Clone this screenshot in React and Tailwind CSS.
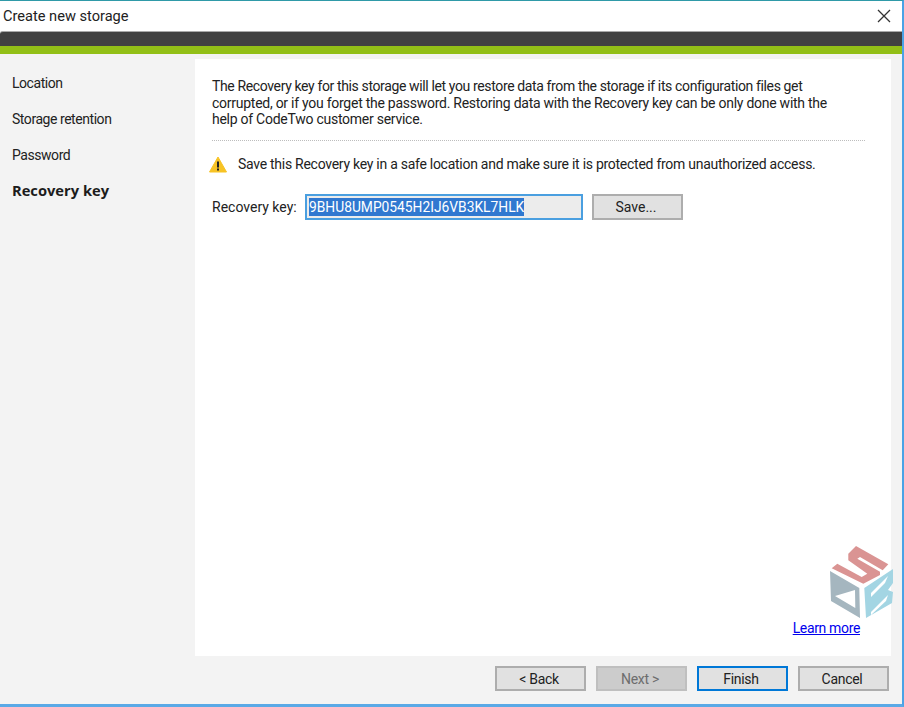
const navItems = ["Location", "Storage retention", "Password", "Recovery key"];

const CubeLogo = () => (
  <svg width="66" height="76" viewBox="0 0 66 76" className="block">
    {/* S, lid of the cube */}
    <path
      d="M26 1 L58.3 19.3 L52.7 25.3 L30 12 L27.3 13.7 L50 26.7 L50 30 L33.3 38.7 L1.7 23.3 L7.3 18.7 L31.7 32 L37.3 28.7 L18.3 15.3 L18.3 8.7 Z"
      fill="#da9493"
    />
    {/* left face */}
    <path fillRule="evenodd" d="M0 26 L29.3 43 L30 73 L1 56 Z M5 51 L25 45 L25.3 63 Z" fill="#a5b6bf" />
    {/* B, right face */}
    <path
      fillRule="evenodd"
      d="M63 24 L63 38 L58 45 L63 47 L62 58 L36 73 L34.3 43 Z M41 48 L58 31 L55 38 L41 52 Z M41 67 L58 50 L56 56 L41 70 Z"
      fill="#a3d5e3"
    />
  </svg>
);

const WarningIcon = () => (
  <svg width="18" height="17" viewBox="0 0 18 17" className="block shrink-0">
    <path d="M9 1 L17.5 16 L0.5 16 Z" fill="#f7c325" stroke="#f7c325" strokeLinejoin="round" />
    <rect x="8" y="5.5" width="2" height="6" fill="#222" />
    <rect x="8" y="12.5" width="2" height="2" fill="#222" />
  </svg>
);

const FooterButton = ({ label, disabled, focused }) => (
  <button
    className={`w-[91px] h-[25px] flex items-center justify-center pr-[3px] text-[14px] tracking-[-0.3px] leading-none ${
      disabled
        ? "bg-[#cccccc] border-2 border-[#bfbfbf] text-[#6d6d6d]"
        : focused
        ? "bg-[#e1e1e1] border-2 border-[#0078d7] text-[#222]"
        : "bg-[#e1e1e1] border-2 border-[#adadad] text-[#222]"
    }`}
  >
    {label}
  </button>
);

export default function App() {
  return (
    <div
      className="relative w-[904px] h-[707px] overflow-hidden flex flex-col bg-[#f3f3f3] border-t border-t-[#2f9aa8] border-r-2 border-r-[#4aa3e6] border-b-[3px] border-b-[#5aa9e6] text-[#222]"
      style={{ fontFamily: 'Roboto, "Noto Sans", sans-serif' }}
    >
      {/* Title bar */}
      <div className="h-[30px] shrink-0 bg-white flex items-center justify-between pl-[3px] pr-[11px]">
        <span className="text-[14.6px] leading-none">Create new storage</span>
        <svg width="14" height="14" viewBox="0 0 14 14" className="block">
          <path d="M1 1 L13 13 M13 1 L1 13" stroke="#333" strokeWidth="1.3" fill="none" />
        </svg>
      </div>
      <div className="h-[15px] shrink-0 bg-[#414141] border-t border-t-[#a9a9a9] rounded-tl-[3px]" />
      <div className="h-[8px] shrink-0 bg-[#92bf17]" />

      <div className="flex-1 flex flex-col min-h-0">
        <div className="flex-1 flex min-h-0 pt-[5px] pr-[11px]">
          {/* Steps */}
          <nav className="w-[195px] shrink-0 flex flex-col pt-[6px]">
            {navItems.map((item, i) => (
              <div
                key={item}
                className={`h-[36px] flex items-center pl-[12px] leading-none ${
                  i === 3 ? "font-['Open_Sans'] text-[14.7px] font-bold text-[#1c1c1c] -translate-y-px" : "text-[14px] tracking-[-0.45px]"
                }`}
              >
                {item}
              </div>
            ))}
          </nav>

          {/* Main panel */}
          <main className="flex-1 bg-white flex flex-col pt-[19px] pl-[17px] pr-[26px] pb-[21px]">
            <p className="text-[14px] tracking-[-0.26px] leading-[16.5px] whitespace-nowrap">
              <span className="tracking-[-0.37px]">
                The Recovery key for this storage will let you restore data from the storage if its configuration files get
              </span>
              <br />
              corrupted, or if you forget the password. Restoring data with the Recovery key can be only done with the
              <br />
              help of CodeTwo customer service.
            </p>
            <div className="mt-[12px] border-t border-dotted border-t-[#bdbdbd]" />
            <div className="mt-[15px] flex items-center gap-[11px] -ml-[3px]">
              <WarningIcon />
              <span className="text-[14px] tracking-[-0.27px] leading-none whitespace-nowrap">
                Save this Recovery key in a safe location and make sure it is protected from unauthorized access.
              </span>
            </div>
            <div className="mt-[21px] flex items-center">
              <span className="text-[14px] leading-none whitespace-nowrap w-[93px]">Recovery key:</span>
              <div className="w-[278px] h-[26px] flex items-center border-2 border-[#4a9fe0] bg-[#ececec] pl-[2px]">
                <span className="bg-[#3078d0] text-white text-[13.8px] leading-[18px] whitespace-nowrap">
                  9BHU8UMP0545H2IJ6VB3KL7HLK
                </span>
              </div>
              <button className="ml-[9px] w-[91px] h-[26px] pr-[3px] bg-[#e1e1e1] border-2 border-[#adadad] text-[14px] leading-none">
                Save...
              </button>
            </div>

            <div className="mt-auto flex justify-end">
              <a href="#" className="mr-[5px] text-[14px] tracking-[-0.35px] leading-none text-[#0000ee] underline">
                Learn more
              </a>
            </div>
          </main>
        </div>

        {/* Footer buttons */}
        <div className="h-[48px] shrink-0 flex items-start justify-end gap-[10px] pt-[10px] pr-[13px]">
          <FooterButton label="< Back" />
          <FooterButton label="Next >" disabled />
          <FooterButton label="Finish" focused />
          <FooterButton label="Cancel" />
        </div>
      </div>

      {/* watermark sits over the panel edge */}
      <div className="absolute left-[830px] top-[544px]">
        <CubeLogo />
      </div>
    </div>
  );
}
